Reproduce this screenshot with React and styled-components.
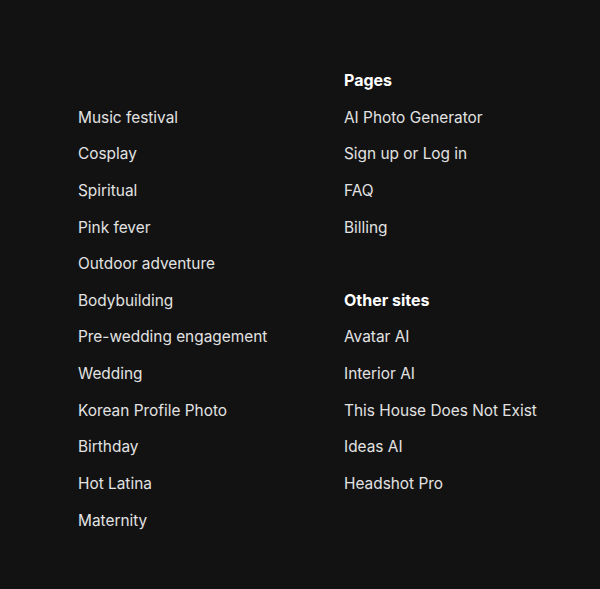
import React from "react";
import styled, { createGlobalStyle } from "styled-components";

const GlobalStyle = createGlobalStyle`
	html, body {
		margin: 0;
		padding: 0;
		background-color: #121212;
	}
	body {
		font-family: Inter, "Noto Sans", sans-serif;
		-webkit-font-smoothing: antialiased;
	}
`;

const Footer = styled("footer")`
	width: 600px;
	height: 589px;
	box-sizing: border-box;
	padding: 68px 0 0 78px;
	background-color: #121212;
	display: grid;
	grid-template-columns: 266px auto;
	align-items: start;
`;

const Column = styled("div")`
	display: flex;
	flex-direction: column;
	gap: 49.3px;
	padding-top: ${(props) => (props.$offset ? "36.64px" : "0")};
`;

const Section = styled("div")`
	display: flex;
	flex-direction: column;
	gap: 12.64px;
`;

const Heading = styled("h3")`
	margin: 0;
	font-size: 16px;
	line-height: 24px;
	font-weight: 700;
	color: #ffffff;
`;

const Link = styled("a")`
	display: block;
	padding-top: 1px;
	font-size: 15.4px;
	line-height: 23px;
	font-weight: 400;
	color: #e2e2e2;
	text-decoration: none;
	cursor: pointer;
	white-space: nowrap;

	&:hover {
		color: #ffffff;
	}
`;

const styles = [
	"Music festival",
	"Cosplay",
	"Spiritual",
	"Pink fever",
	"Outdoor adventure",
	"Bodybuilding",
	"Pre-wedding engagement",
	"Wedding",
	"Korean Profile Photo",
	"Birthday",
	"Hot Latina",
	"Maternity",
];

const pages = ["AI Photo Generator", "Sign up or Log in", "FAQ", "Billing"];

const otherSites = [
	"Avatar AI",
	"Interior AI",
	"This House Does Not Exist",
	"Ideas AI",
	"Headshot Pro",
];

function App() {
	return (
		<>
			<GlobalStyle />
			<Footer>
				<Column $offset>
					<Section>
						{styles.map((item) => (
							<Link key={item}>{item}</Link>
						))}
					</Section>
				</Column>
				<Column>
					<Section>
						<Heading>Pages</Heading>
						{pages.map((item) => (
							<Link key={item}>{item}</Link>
						))}
					</Section>
					<Section>
						<Heading>Other sites</Heading>
						{otherSites.map((item) => (
							<Link key={item}>{item}</Link>
						))}
					</Section>
				</Column>
			</Footer>
		</>
	);
}

export default App;
